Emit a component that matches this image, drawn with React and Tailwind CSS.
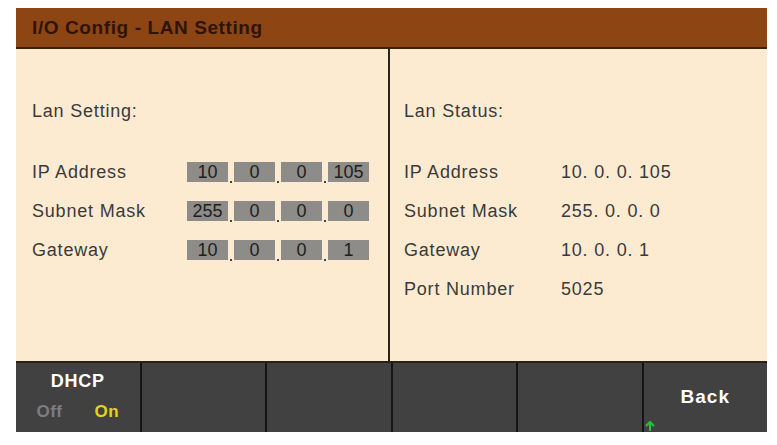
const ipRows = [
  { label: 'IP Address', parts: ['10', '0', '0', '105'] },
  { label: 'Subnet Mask', parts: ['255', '0', '0', '0'] },
  { label: 'Gateway', parts: ['10', '0', '0', '1'] },
]

const statusRows = [
  ['IP Address', '10. 0. 0. 105'],
  ['Subnet Mask', '255. 0. 0. 0'],
  ['Gateway', '10. 0. 0. 1'],
  ['Port Number', '5025'],
]

function IpBox({ value }) {
  return (
    <div className="w-[41px] h-[20px] bg-[#8e8c89] flex items-center justify-center text-[#1e1e1e] leading-none tracking-[0px]">
      {value}
    </div>
  )
}

function SoftKey({ children, last }) {
  return (
    <div className={`flex-1 h-full ${last ? '' : 'border-r-2 border-[#151515]'} flex flex-col items-center justify-center`}>
      {children}
    </div>
  )
}

export default function App() {
  return (
    <div className="w-[777px] h-[445px] bg-white pt-[8px] pl-[16px]" style={{ fontFamily: '"Liberation Sans", Arial, sans-serif' }}>
      <div className="w-[751px] flex flex-col">
        <div className="h-[41px] bg-[#8c4513] border-b-2 border-[#3b1f10] flex items-center pl-[16px]">
          <span className="text-[19px] font-bold text-[#2e1408] tracking-[0.6px] mt-[2px]">I/O Config - LAN Setting</span>
        </div>
        <div className="h-[312px] bg-[#fdebd1] flex text-[18px] text-[#3a3a3a] tracking-[0.8px]">
          <div className="w-[374px] border-r-2 border-[#2a2420] pl-[16px] pt-[51px]">
            <div className="h-[22px] leading-[22px]">Lan Setting:</div>
            <div className="mt-[40px] flex flex-col gap-[19px]">
              {ipRows.map((r) => (
                <div key={r.label} className="flex items-center h-[20px]">
                  <div className="w-[155px]">{r.label}</div>
                  <div className="flex items-end">
                    {r.parts.map((p, i) => (
                      <div key={i} className="flex items-end">
                        {i > 0 && <div className="w-[6px] h-[20px] flex items-end justify-center"><div className="w-[2px] h-[2px] bg-[#444] mb-[-1px]" /></div>}
                        <IpBox value={p} />
                      </div>
                    ))}
                  </div>
                </div>
              ))}
            </div>
          </div>
          <div className="flex-1 pl-[14px] pt-[51px]">
            <div className="h-[22px] leading-[22px]">Lan Status:</div>
            <div className="mt-[40px] flex flex-col gap-[19px]">
              {statusRows.map(([k, v]) => (
                <div key={k} className="flex items-center h-[20px]">
                  <div className="w-[157px]">{k}</div>
                  <div>{v}</div>
                </div>
              ))}
            </div>
          </div>
        </div>
        <div className="h-[71px] bg-[#414141] border-t-2 border-[#2a2018] flex">
          <SoftKey>
            <div className="text-white font-bold text-[18px] tracking-[0.8px] leading-none mt-[-4px]">DHCP</div>
            <div className="flex gap-[32px] mt-[13px] font-bold text-[17px] tracking-[0.5px] leading-none">
              <span className="text-[#7d7d7d]">Off</span>
              <span className="text-[#e6d21c]">On</span>
            </div>
          </SoftKey>
          <SoftKey />
          <SoftKey />
          <SoftKey />
          <SoftKey />
          <SoftKey last>
            <div className="relative w-full h-full flex items-center justify-center">
              <span className="text-white font-bold text-[19px] tracking-[1px]">Back</span>
              <svg className="absolute left-[0px] bottom-[0px]" width="12" height="12" viewBox="0 0 12 12">
                <path d="M6 11V2M2 6l4-4 4 4" stroke="#22c43a" strokeWidth="2" fill="none" />
              </svg>
            </div>
          </SoftKey>
        </div>
      </div>
    </div>
  )
}
